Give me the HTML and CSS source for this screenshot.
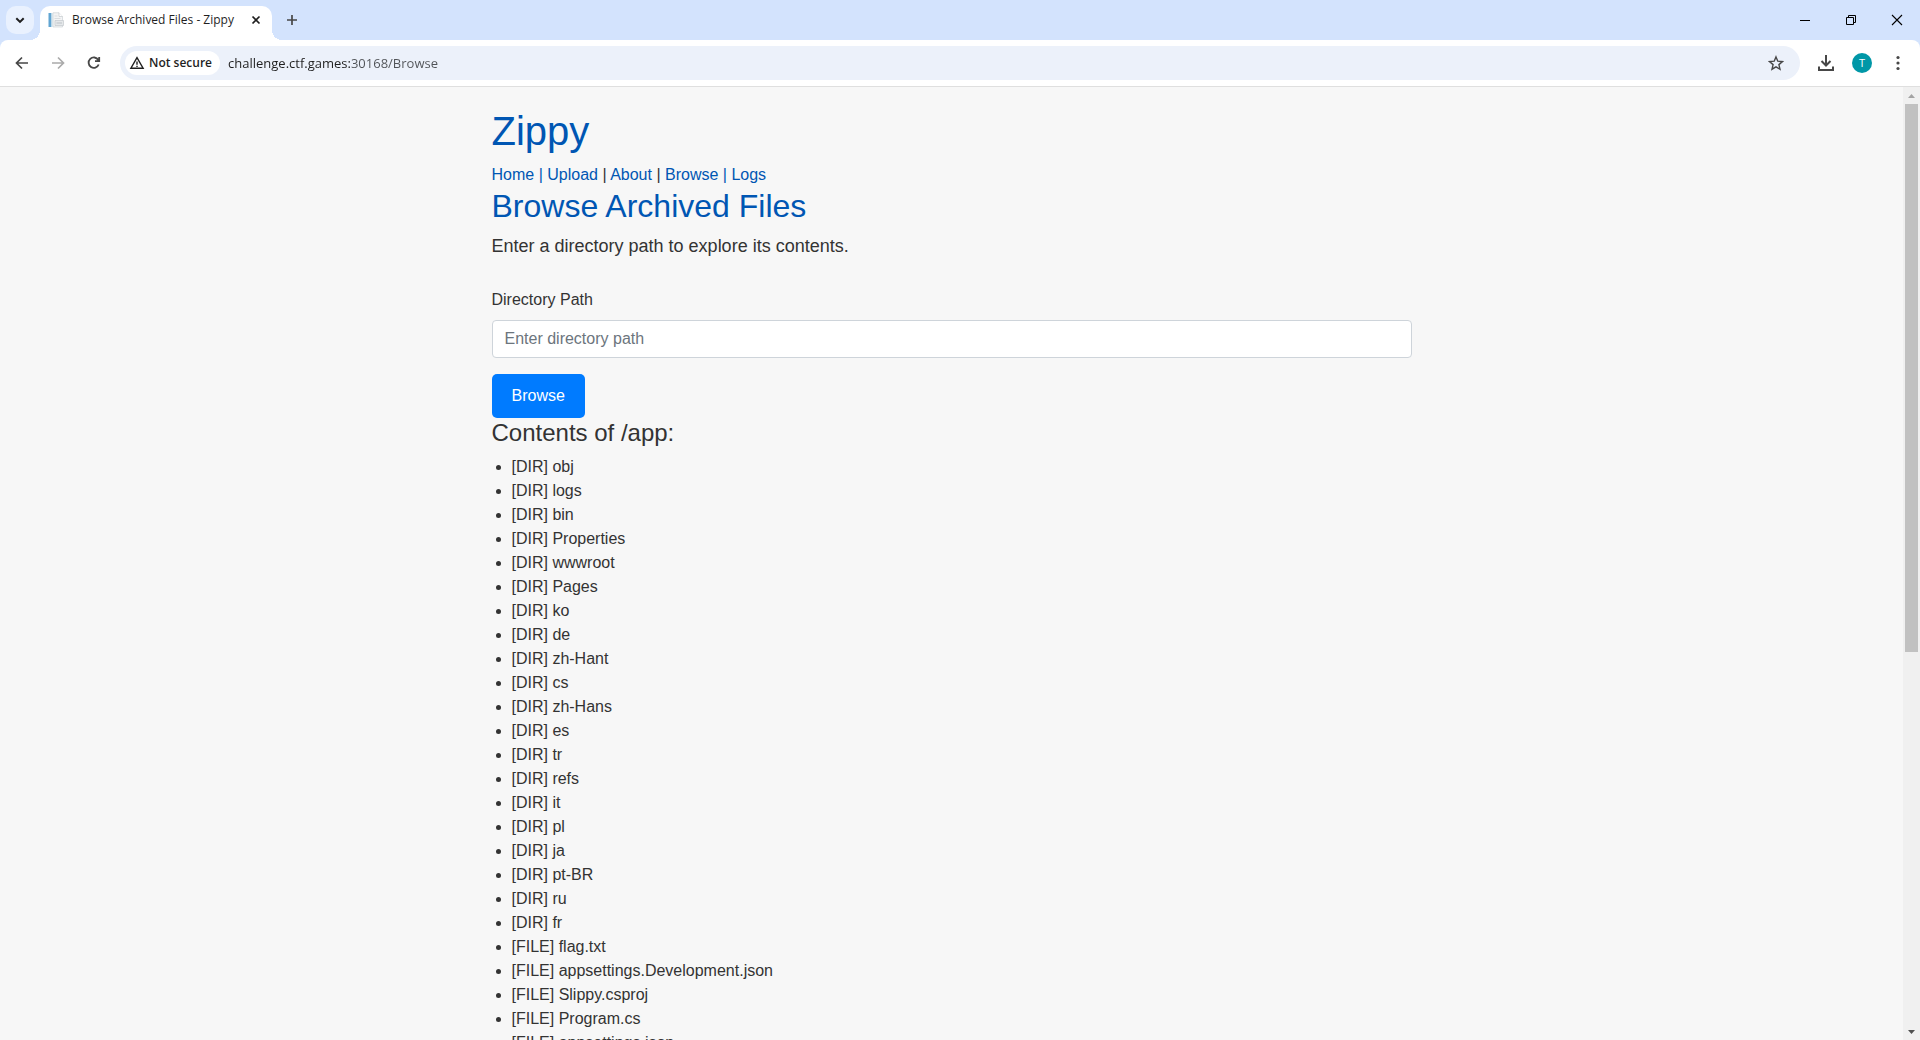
FILE: index.html
```html
<!DOCTYPE html>
<html lang="en">
<head>
<meta charset="utf-8">
<title>Browse Archived Files - Zippy</title>
<link rel="stylesheet" href="styles.css">
</head>
<body>
<header class="browser">
  <div class="tab-strip">
    <button class="tab-search" aria-label="Search tabs"><svg width="12" height="12" viewBox="0 0 12 12" fill="none" stroke="#1f1f1f" stroke-width="2"><path d="M2.3 4.2 6 7.9l3.7-3.7"/></svg></button>
    <div class="tab">
      <svg class="favicon" width="16" height="16" viewBox="0 0 16 16"><path d="M.5 1H3.500v14H.5z" fill="#61a5d2"/><path d="M3.500 1h1v14h-1z" fill="#c6deec"/><path d="M5 .8h6l3.500 3.700V15H5z" fill="#f3f4f5" stroke="#cdd2d6" stroke-width=".7"/><path d="M11 .8v3.700h3.500" fill="#fff" stroke="#c4c9cd" stroke-width=".7"/><path d="M6.500 4h3M6.500 6.500h6" stroke="#d9dde0"/><path d="M7 8.500h8.500v5H7z" fill="#e5e8ea" stroke="#c4c9cd" stroke-width=".7"/><path d="M8.500 11h5.500" stroke="#bcc2c7"/></svg>
      <span class="tab-title">Browse Archived Files - Zippy</span>
      <button class="icon-btn tab-close" aria-label="Close tab"><svg width="16" height="16" viewBox="0 0 16 16" stroke="#1f1f1f" stroke-width="1.700"><path d="m4.500 4.500 7 7m0-7-7 7"/></svg></button>
    </div>
    <button class="icon-btn new-tab" aria-label="New tab"><svg width="16" height="16" viewBox="0 0 16 16" stroke="#474747" stroke-width="1.700"><path d="M8 3v10M3 8h10"/></svg></button>
    <div class="window-controls">
      <button class="icon-btn" aria-label="Minimize"><svg width="12" height="12" viewBox="0 0 12 12" stroke="#000"><path d="M1 6.500h10"/></svg></button>
      <button class="icon-btn" aria-label="Restore"><svg width="12" height="12" viewBox="0 0 12 12" fill="none" stroke="#000"><path d="M1.500 3.500h7v7h-7zM3.500 3.500v-2h7v7h-2"/></svg></button>
      <button class="icon-btn" aria-label="Close"><svg width="12" height="12" viewBox="0 0 12 12" stroke="#000" stroke-width="1.100"><path d="m1 1 10 10M11 1 1 11"/></svg></button>
    </div>
  </div>
  <div class="toolbar">
    <div class="nav-buttons">
      <button class="icon-btn" aria-label="Back"><svg width="16" height="16" viewBox="0 0 16 16" fill="none" stroke="#474747" stroke-width="1.700"><path d="M14 8H3M8 2.500 2.500 8 8 13.500"/></svg></button>
      <button class="icon-btn" aria-label="Forward" disabled><svg width="16" height="16" viewBox="0 0 16 16" fill="none" stroke="#ababab" stroke-width="1.700"><path d="M2 8h11M8 2.500 13.500 8 8 13.500"/></svg></button>
      <button class="icon-btn" aria-label="Reload"><svg width="16" height="16" viewBox="0 0 16 16" fill="none" stroke="#474747" stroke-width="1.800"><path d="M12.700 9.500A5.200 5.200 0 1 1 12.300 5M13.200 2v4.200H9"/></svg></button>
    </div>
    <div class="address-bar">
      <button class="security"><svg width="16" height="16" viewBox="0 0 16 16" fill="none" stroke="#1f1f1f" stroke-width="1.400"><path d="M8 2.700 1.900 13.200h12.200zM8 6.500v3.200M8 10.700v1.400"/></svg>Not secure</button>
      <input class="url" type="text" aria-label="Address" value="challenge.ctf.games:30168/Browse">
      <button class="icon-btn" aria-label="Bookmark this page"><svg width="16" height="16" viewBox="0 0 16 16" fill="none" stroke="#474747" stroke-width="1.400"><path d="m8 1.900 1.800 4.300 4.700.4-3.600 3 1.100 4.600L8 11.800l-4 2.400 1.100-4.600-3.600-3 4.700-.4z"/></svg></button>
    </div>
    <div class="actions">
      <button class="icon-btn" aria-label="Downloads"><svg width="18" height="18" viewBox="0 0 18 18" fill="none" stroke="#474747" stroke-width="2"><path d="M9 1v10M4.500 7 9 11.500 13.500 7M2 12.500V16h14v-3.500"/></svg></button>
      <button class="avatar" aria-label="Profile">T</button>
      <button class="icon-btn" aria-label="Menu"><svg width="16" height="16" viewBox="0 0 16 16" fill="#474747"><circle cx="8" cy="2.500" r="1.600"/><circle cx="8" cy="8" r="1.600"/><circle cx="8" cy="13.500" r="1.600"/></svg></button>
    </div>
  </div>
</header>
<div class="viewport">
  <div class="page">
    <main class="container">
      <h1>Zippy</h1>
      <nav><a href="#">Home</a> <a href="#">|</a> <a href="#">Upload</a> | <a href="#">About</a> | <a href="#">Browse</a> <a href="#">|</a> <a href="#">Logs</a></nav>
      <h2>Browse Archived Files</h2>
      <p class="lead">Enter a directory path to explore its contents.</p>
      <form>
        <label for="path">Directory Path</label>
        <input class="path" id="path" type="text" placeholder="Enter directory path">
        <button class="submit" type="button">Browse</button>
      </form>
      <h3>Contents of /app:</h3>
      <ul>
        <li>[DIR] obj</li>
        <li>[DIR] logs</li>
        <li>[DIR] bin</li>
        <li>[DIR] Properties</li>
        <li>[DIR] wwwroot</li>
        <li>[DIR] Pages</li>
        <li>[DIR] ko</li>
        <li>[DIR] de</li>
        <li>[DIR] zh-Hant</li>
        <li>[DIR] cs</li>
        <li>[DIR] zh-Hans</li>
        <li>[DIR] es</li>
        <li>[DIR] tr</li>
        <li>[DIR] refs</li>
        <li>[DIR] it</li>
        <li>[DIR] pl</li>
        <li>[DIR] ja</li>
        <li>[DIR] pt-BR</li>
        <li>[DIR] ru</li>
        <li>[DIR] fr</li>
        <li>[FILE] flag.txt</li>
        <li>[FILE] appsettings.Development.json</li>
        <li>[FILE] Slippy.csproj</li>
        <li>[FILE] Program.cs</li>
        <li>[FILE] appsettings.json</li>
      </ul>
    </main>
  </div>
  <div class="scrollbar" aria-hidden="true">
    <svg width="17" height="17" viewBox="0 0 17 17"><path d="M5 11h7L8.500 7z" fill="#a3a3a3"/></svg>
    <div class="track"><div class="thumb"></div></div>
    <svg width="17" height="17" viewBox="0 0 17 17"><path d="M5 7h7l-3.500 4z" fill="#505050"/></svg>
  </div>
</div>
</body>
</html>
```

FILE: styles.css
```css
* { box-sizing: border-box; }

body {
  margin: 0;
  height: 100vh;
  display: flex;
  flex-direction: column;
  overflow: hidden;
  font: 16px/24px "Liberation Sans", Arial, sans-serif;
  color: #333;
  background: #f7f7f7;
}

button, input { font: inherit; color: inherit; border: 0; margin: 0; padding: 0; background: none; }
svg { display: block; flex: none; }

/* Browser window */
.browser {
  flex: none;
  font: 12px/16px "Open Sans", "Noto Sans", sans-serif;
  color: #1f1f1f;
  background: #d3e3fd;
}

.icon-btn { display: flex; align-items: center; justify-content: center; width: 28px; height: 28px; flex: none; }

.tab-strip { display: flex; align-items: flex-start; height: 40px; padding: 6px 0 0 6px; }

.tab-search {
  display: flex;
  align-items: center;
  justify-content: center;
  width: 28px;
  height: 28px;
  border-radius: 10px;
  background: #e9f1fe;
}

.tab {
  position: relative;
  display: flex;
  align-items: center;
  width: 232px;
  height: 34px;
  margin-left: 6px;
  padding: 0 2px 6px 8px;
  border-radius: 10px 10px 0 0;
  background: #fff;
}
.tab::before, .tab::after {
  content: "";
  position: absolute;
  bottom: 0;
  width: 10px;
  height: 10px;
}
.tab::before { right: 100%; background: radial-gradient(circle at 0 0, transparent 10px, #fff 10px); }
.tab::after { left: 100%; background: radial-gradient(circle at 100% 0, transparent 10px, #fff 10px); }
.tab-title { flex: 1; margin-left: 8px; white-space: nowrap; }
.new-tab { margin-left: 6px; }

.window-controls { display: flex; margin-left: auto; }
.window-controls .icon-btn { width: 46px; }

.toolbar {
  display: flex;
  align-items: center;
  height: 47px;
  padding: 0 8px 1px;
  border-bottom: 1px solid #dfdfdf;
  border-radius: 8px 8px 0 0;
  background: #fff;
}
.nav-buttons { display: flex; gap: 8px; margin-right: 12px; }

.address-bar {
  flex: 1;
  display: flex;
  align-items: center;
  height: 34px;
  padding: 0 10px 0 5px;
  border-radius: 17px;
  background: #ecf1fa;
}
.security {
  display: flex;
  align-items: center;
  gap: 4px;
  height: 24px;
  padding: 0 8px 0 4px;
  border-radius: 12px;
  background: #fff;
  font-weight: 600;
  white-space: nowrap;
}
.url {
  flex: 1;
  height: 24px;
  margin-left: 8px;
  font-size: 13px;
  background: linear-gradient(to right, #1f1f1f 122px, #505357 122px);
  background-clip: text;
  -webkit-background-clip: text;
  -webkit-text-fill-color: transparent;
}
.actions { display: flex; align-items: center; gap: 12px; margin-left: 12px; }
.avatar {
  width: 20px;
  height: 20px;
  border-radius: 50%;
  background: #0097a7;
  color: #fff;
  font-size: 11px;
  line-height: 20px;
  text-align: center;
}

/* Page area */
.viewport { flex: 1; min-height: 0; display: flex; }
.page { flex: 1; overflow: hidden; }

.scrollbar { display: flex; flex-direction: column; width: 17px; background: #f0f0f0; }
.track { flex: 1; padding: 0 2px; }
.thumb { height: 548px; max-height: 100%; background: #c1c1c1; }

.container { max-width: 960px; margin: 0 auto; padding: 20px; }

h1, h2, h3 { margin: 0 0 8px; font-weight: 400; }
h1 { font-size: 40px; line-height: 48px; color: #0056b3; }
h2 { font-size: 32px; line-height: 38px; color: #0056b3; }
h3 { font-size: 24px; line-height: 29px; }
a { color: #0056b3; text-decoration: none; }
.lead { margin: 0 0 28px; font-size: 18px; line-height: 27px; }

label { display: block; margin-bottom: 8px; }
.path {
  display: block;
  width: 100%;
  height: 38px;
  padding: 6px 12px;
  border: 1px solid #ced4da;
  border-radius: 4px;
  background: #fff;
}
.path::placeholder { color: #6c757d; opacity: 1; }
.submit {
  display: block;
  margin-top: 16px;
  padding: 10px 20px;
  border-radius: 5px;
  background: #007bff;
  color: #fff;
}
ul { margin: 0 0 16px; padding-left: 20px; }
```
